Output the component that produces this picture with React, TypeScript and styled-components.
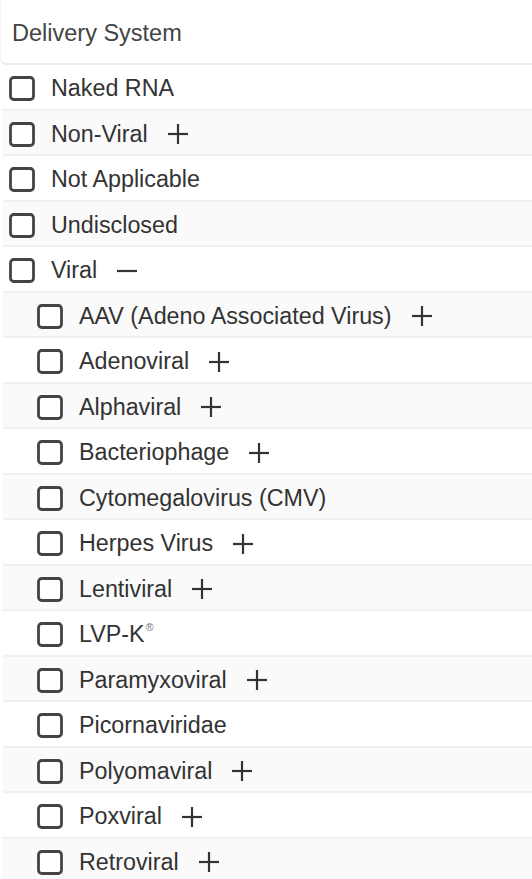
import React from "react";
import styled, { createGlobalStyle } from "styled-components";

const GlobalStyle = createGlobalStyle`
  html, body {
    margin: 0;
    padding: 0;
    background: #ffffff;
    overflow: hidden;
  }
  body {
    font-family: "Liberation Sans", Arial, sans-serif;
    color: #333333;
  }
`;

const Panel = styled.div`
  width: 532px;
  display: flex;
  flex-direction: column;
`;

const Header = styled.div`
  height: 65px;
  box-sizing: border-box;
  display: flex;
  align-items: center;
  padding: 4px 0 0 11px;
  font-size: 23.5px;
  color: #444444;
  border-bottom: 2px solid #ececec;
  border-left: 1px solid #f4f4f4;
  border-bottom-left-radius: 6px;
`;

const List = styled.div`
  display: flex;
  flex-direction: column;
  margin-left: 3px;
`;

const Row = styled.div<{ $level: number; $striped: boolean }>`
  height: 45.5px;
  box-sizing: border-box;
  display: flex;
  align-items: center;
  padding-top: 4px;
  padding-left: ${(p) => 6 + p.$level * 28}px;
  background: ${(p) => (p.$striped ? "#fafafa" : "#ffffff")};
  border-bottom: 2px solid #f0f0f0;
`;

const Box = styled.svg`
  flex: 0 0 auto;
  width: 26px;
  height: 25px;
  margin-right: 16px;
`;

const Label = styled.span`
  font-size: 23.3px;
  color: #333333;
  white-space: nowrap;
  line-height: 1;
`;

const Reg = styled.sup`
  font-size: 11px;
  color: #777777;
  vertical-align: top;
  position: relative;
  top: -1px;
  margin-left: 1px;
`;

const Toggle = styled.svg`
  flex: 0 0 auto;
  width: 20px;
  height: 20px;
  margin-left: 20px;
`;

type Item = { label: string; level: number; toggle?: "plus" | "minus"; reg?: boolean };

const items: Item[] = [
  { label: "Naked RNA", level: 0 },
  { label: "Non-Viral", level: 0, toggle: "plus" },
  { label: "Not Applicable", level: 0 },
  { label: "Undisclosed", level: 0 },
  { label: "Viral", level: 0, toggle: "minus" },
  { label: "AAV (Adeno Associated Virus)", level: 1, toggle: "plus" },
  { label: "Adenoviral", level: 1, toggle: "plus" },
  { label: "Alphaviral", level: 1, toggle: "plus" },
  { label: "Bacteriophage", level: 1, toggle: "plus" },
  { label: "Cytomegalovirus (CMV)", level: 1 },
  { label: "Herpes Virus", level: 1, toggle: "plus" },
  { label: "Lentiviral", level: 1, toggle: "plus" },
  { label: "LVP-K", level: 1, reg: true },
  { label: "Paramyxoviral", level: 1, toggle: "plus" },
  { label: "Picornaviridae", level: 1 },
  { label: "Polyomaviral", level: 1, toggle: "plus" },
  { label: "Poxviral", level: 1, toggle: "plus" },
  { label: "Retroviral", level: 1, toggle: "plus" },
];

const CheckBox = () => (
  <Box viewBox="0 0 26 25">
    <rect x="1.5" y="1.5" width="23" height="22" rx="3.2" fill="#ffffff" stroke="#444444" strokeWidth="2.8" />
  </Box>
);

const ToggleIcon = ({ kind }: { kind: "plus" | "minus" }) => (
  <Toggle viewBox="0 0 20 20">
    <line x1="0" y1="10" x2="20" y2="10" stroke="#333333" strokeWidth="2.2" />
    {kind === "plus" && <line x1="10" y1="0" x2="10" y2="20" stroke="#333333" strokeWidth="2.2" />}
  </Toggle>
);

export default function App() {
  return (
    <>
      <GlobalStyle />
      <Panel>
        <Header>Delivery System</Header>
        <List>
          {items.map((it, i) => (
            <Row key={it.label} $level={it.level} $striped={i % 2 === 1}>
              <CheckBox />
              <Label>
                {it.label}
                {it.reg && <Reg>®</Reg>}
              </Label>
              {it.toggle && <ToggleIcon kind={it.toggle} />}
            </Row>
          ))}
        </List>
      </Panel>
    </>
  );
}
